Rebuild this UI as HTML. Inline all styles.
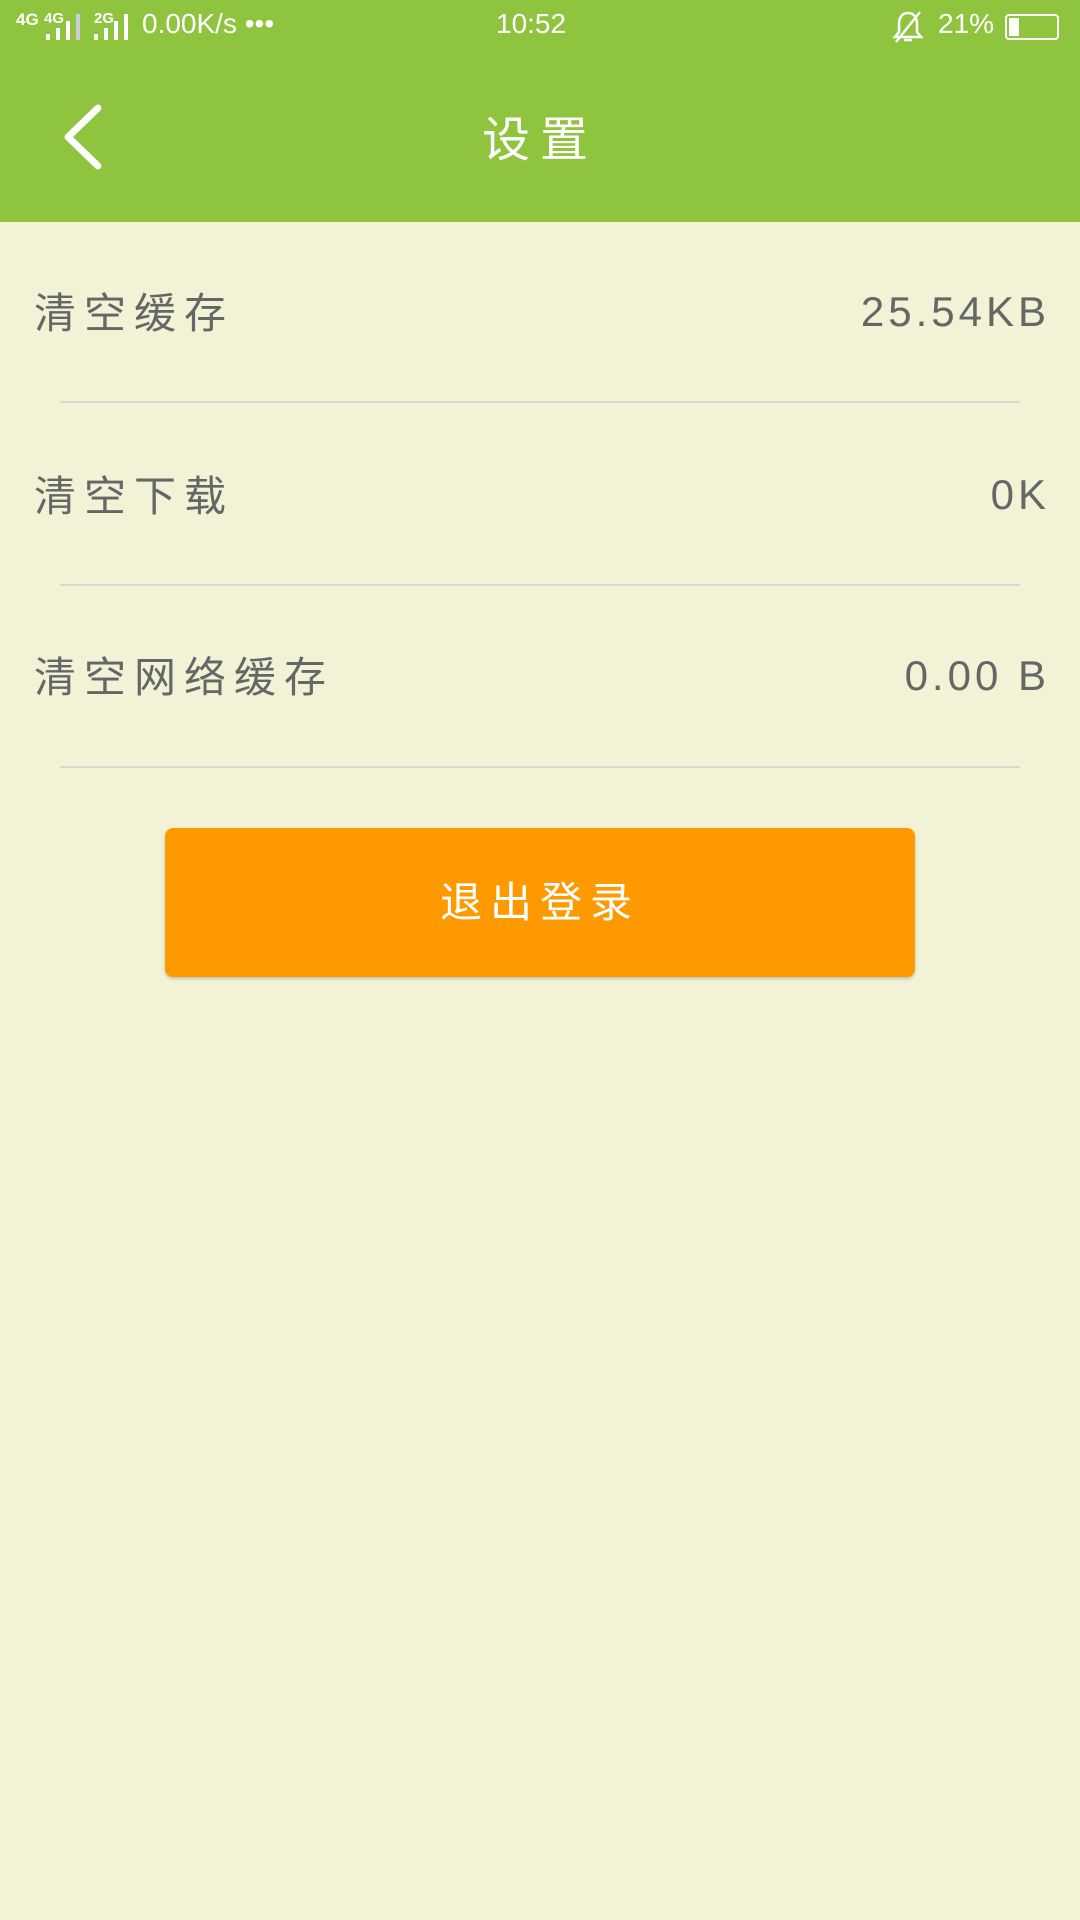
<!DOCTYPE html>
<html><head><meta charset="utf-8"><style>
*{margin:0;padding:0;box-sizing:border-box}
body{width:1080px;height:1920px;background:#f2f2d6;font-family:"Liberation Sans","Noto Sans CJK SC",sans-serif;position:relative;overflow:hidden}
.top{position:absolute;left:0;top:0;width:1080px;height:222px;background:#8fc43e}
.sb{position:absolute;top:8px;color:#fff;font-size:28px}
.title{position:absolute;top:100px;width:1080px;text-align:center;color:#fff;font-size:48px;letter-spacing:10px}
.row{position:absolute;left:34px;right:30px;color:#666;font-size:42px;letter-spacing:8px}
.row span{position:absolute;right:0;top:8px;letter-spacing:4px}
.div{position:absolute;left:60px;width:960px;height:2px;background:#d8d8d0}
.btn{position:absolute;left:165px;top:828px;width:750px;height:149px;background:#ff9900;border-radius:8px;color:#fff;font-size:42px;text-align:center;line-height:149px;letter-spacing:8px;box-shadow:0 2px 3px rgba(0,0,0,.2)}
</style></head><body>
<div class="top">
<div class="sb" style="left:16px;top:10px;font-size:17px;font-weight:bold">4G</div>
<div class="sb" style="left:44px;top:10px;font-size:15px;font-weight:bold">4G</div>
<svg style="position:absolute;left:44px;top:12px" width="40" height="30"><rect x="2" y="22" width="4" height="6" fill="#fff"/><rect x="12" y="16" width="4" height="12" fill="#fff"/><rect x="22" y="9" width="4" height="19" fill="#fff"/><rect x="32" y="2" width="4" height="26" fill="#ccd"/></svg>
<div class="sb" style="left:94px;top:10px;font-size:15px;font-weight:bold">2G</div>
<svg style="position:absolute;left:92px;top:12px" width="40" height="30"><rect x="2" y="22" width="4" height="6" fill="#fff"/><rect x="12" y="16" width="4" height="12" fill="#fff"/><rect x="22" y="9" width="4" height="19" fill="#fff"/><rect x="32" y="2" width="4" height="26" fill="#fff"/></svg>
<div class="sb" style="left:142px">0.00K/s •••</div>
<div class="sb" style="left:496px">10:52</div>
<svg style="position:absolute;left:892px;top:10px" width="32" height="34" viewBox="0 0 32 34"><path d="M16 3 C9 3 7 9 7 14 L7 22 L3 27 L29 27 L25 22 L25 14 C25 9 23 3 16 3 Z M12 30 L20 30 M4 32 L28 2" stroke="#fff" stroke-width="2.5" fill="none"/></svg>
<div class="sb" style="left:938px">21%</div>
<div style="position:absolute;left:1005px;top:14px;width:54px;height:26px;border:2px solid #fff;border-radius:4px"><div style="width:10px;height:18px;margin:2px;background:#fff"></div></div>
<svg style="position:absolute;left:60px;top:104px" width="46" height="66" viewBox="0 0 46 66"><path d="M38 4 L8 33 L38 62" stroke="#fff" stroke-width="7" fill="none" stroke-linecap="round" stroke-linejoin="round"/></svg>
<div class="title">设置</div>
</div>
<div class="row" style="top:280px">清空缓存<span>25.54KB</span></div>
<div class="div" style="top:401px"></div>
<div class="row" style="top:463px">清空下载<span>0K</span></div>
<div class="div" style="top:584px"></div>
<div class="row" style="top:644px">清空网络缓存<span>0.00 B</span></div>
<div class="div" style="top:766px"></div>
<div class="btn">退出登录</div>
</body></html>
